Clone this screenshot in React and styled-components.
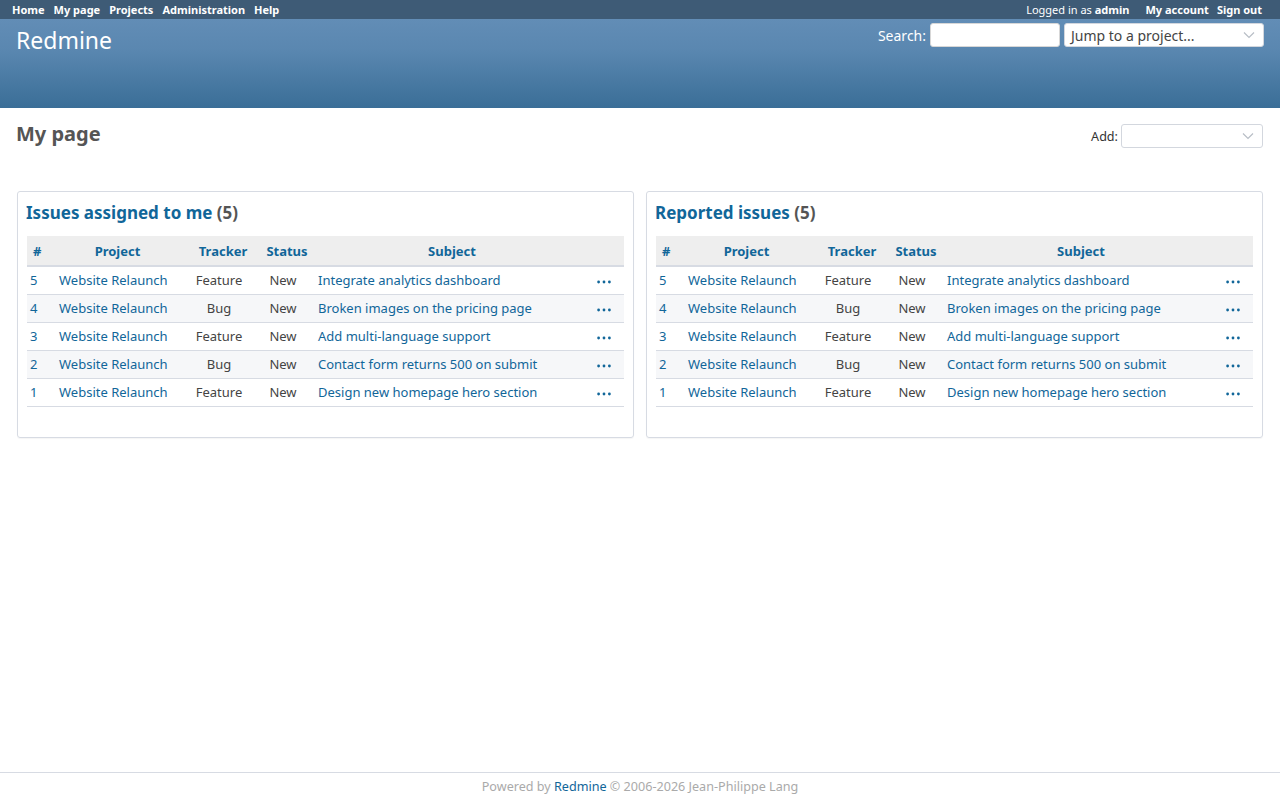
import React from "react";
import styled, { createGlobalStyle } from "styled-components";

const GlobalStyle = createGlobalStyle`
  html, body {
    margin: 0;
    padding: 0;
    height: 100%;
  }
  body {
    font-family: "Noto Sans", "DejaVu Sans", sans-serif;
    font-size: 13px;
    color: #333;
    background: #fff;
  }
  #root {
    min-height: 100%;
    display: flex;
    flex-direction: column;
  }
`;

const Wrapper = styled.div`
  display: flex;
  flex-direction: column;
  min-height: 100vh;
`;

const TopMenu = styled.div`
  display: flex;
  justify-content: space-between;
  align-items: center;
  height: 19px;
  padding: 0 18px 0 12px;
  background: #3e5b76;
  font-size: 11px;
  font-weight: bold;
  color: #fff;
`;

const MenuList = styled.div`
  display: flex;
  align-items: center;
  gap: ${(p) => p.$gap || 9}px;
`;

const MenuLink = styled.a`
  color: #fff;
  text-decoration: none;
`;

const LoggedAs = styled.span`
  font-weight: normal;
  margin-right: 8px;

  b {
    font-weight: bold;
  }
`;

const Header = styled.div`
  display: flex;
  justify-content: space-between;
  align-items: flex-start;
  height: 89px;
  box-sizing: border-box;
  padding: 4px 16px 0 16px;
  background: linear-gradient(to bottom, #628db6 0%, #5a87b0 35%, #3a6e97 100%);
  color: #fff;
`;

const Title = styled.h1`
  margin: 1px 0 0;
  font-size: 23px;
  font-weight: normal;
`;

const QuickSearch = styled.div`
  display: flex;
  align-items: center;
  gap: 4px;
  font-size: 14px;
`;

const SearchLabel = styled.label`
  color: #fff;
`;

const TextInput = styled.input`
  width: 130px;
  height: 24px;
  box-sizing: border-box;
  border: 1px solid #d7d7d7;
  border-radius: 3px;
  background: #fff;
  padding: 0 4px;
`;

const SelectBox = styled.div`
  display: flex;
  align-items: center;
  justify-content: space-between;
  width: ${(p) => p.width}px;
  height: 24px;
  box-sizing: border-box;
  border: 1px solid #d3d7de;
  border-radius: 3px;
  background: #fff;
  padding: 0 8px 0 6px;
  color: #444;
  font-size: 14px;
`;

const Main = styled.div`
  flex: 1;
  padding: 10px 17px 0 17px;
`;

const ContentHead = styled.div`
  display: flex;
  justify-content: space-between;
  align-items: flex-start;
  margin-bottom: 43px;
`;

const PageTitle = styled.h2`
  margin: 2px 0 0 -1px;
  font-size: 20px;
  font-weight: bold;
  color: #555;
`;

const AddBlock = styled.div`
  display: flex;
  align-items: center;
  gap: 3px;
  margin: 6px 0 0;
  font-size: 12.6px;
  color: #333;
`;

const Columns = styled.div`
  display: grid;
  grid-template-columns: 1fr 1fr;
  gap: 12px;
`;

const Box = styled.div`
  border: 1px solid #d7dbe3;
  border-radius: 3px;
  padding: 8px 9px 30px 9px;
  box-shadow: 0 1px 1px rgba(0, 0, 0, 0.04);
`;

const BoxTitle = styled.h3`
  margin: 1px 0 12px -1px;
  font-size: 17px;
  font-weight: bold;
  color: #555;

  a {
    color: #169;
    text-decoration: none;
  }
`;

const Table = styled.table`
  width: 100%;
  table-layout: fixed;
  border-collapse: collapse;
  font-size: 13px;
`;

const Th = styled.th`
  box-sizing: border-box;
  height: 30px;
  background: #eee;
  border-bottom: 2px solid #d7dbe3;
  color: #169;
  font-weight: bold;
  text-align: ${(p) => p.align || "center"};
  padding: ${(p) => p.$pad || "0 4px 0 12px"};
  width: ${(p) => p.width || "auto"};
`;

const Row = styled.tr`
  height: 28px;
  background: ${(p) => (p.$even ? "#f6f7f9" : "#fff")};
  border-bottom: 1px solid #d7dbe3;
`;

const Td = styled.td`
  padding: 0 4px 0 ${(p) => (p.$tight ? 3 : 4)}px;
  text-align: ${(p) => p.align || "left"};
  white-space: nowrap;
  overflow: hidden;
  color: #444;

  a {
    color: #169;
    text-decoration: none;
  }
`;

const MenuDots = styled.svg`
  display: inline-block;
  vertical-align: middle;
  margin-right: 9px;
`;

const Footer = styled.div`
  border-top: 1px solid #d7dbe3;
  text-align: center;
  color: #aaa;
  font-size: 12.6px;
  padding: 5px 0 5px;

  a {
    color: #169;
    text-decoration: none;
  }
`;

const Chevron = () => (
  <svg width="12" height="8" viewBox="0 0 12 8">
    <path d="M1 1.5 L6 6.5 L11 1.5" fill="none" stroke="#b8bec6" strokeWidth="1.2" />
  </svg>
);

const Dots = () => (
  <MenuDots width="14" height="4" viewBox="0 0 14 4">
    <circle cx="1.6" cy="2" r="1.4" fill="#169" />
    <circle cx="7" cy="2" r="1.4" fill="#169" />
    <circle cx="12.4" cy="2" r="1.4" fill="#169" />
  </MenuDots>
);

const issues = [
  { id: 5, tracker: "Feature", subject: "Integrate analytics dashboard" },
  { id: 4, tracker: "Bug", subject: "Broken images on the pricing page" },
  { id: 3, tracker: "Feature", subject: "Add multi-language support" },
  { id: 2, tracker: "Bug", subject: "Contact form returns 500 on submit" },
  { id: 1, tracker: "Feature", subject: "Design new homepage hero section" },
];

const IssueBox = ({ title }) => (
  <Box>
    <BoxTitle>
      <a href="#">{title}</a> (5)
    </BoxTitle>
    <Table>
      <thead>
        <tr>
          <Th width="28px" align="left" $pad="0 0 0 6px">#</Th>
          <Th width="131px" $pad="0 10px 0 4px">Project</Th>
          <Th width="66px">Tracker</Th>
          <Th width="62px">Status</Th>
          <Th>Subject</Th>
          <Th width="42px"></Th>
        </tr>
      </thead>
      <tbody>
        {issues.map((issue, i) => (
          <Row key={issue.id} $even={i % 2 === 1}>
            <Td $tight>
              <a href="#">{issue.id}</a>
            </Td>
            <Td>
              <a href="#">Website Relaunch</a>
            </Td>
            <Td align="center">{issue.tracker}</Td>
            <Td align="center">New</Td>
            <Td>
              <a href="#">{issue.subject}</a>
            </Td>
            <Td align="right">
              <Dots />
            </Td>
          </Row>
        ))}
      </tbody>
    </Table>
  </Box>
);

export default function App() {
  return (
    <Wrapper>
      <GlobalStyle />
      <TopMenu>
        <MenuList>
          <MenuLink href="#">Home</MenuLink>
          <MenuLink href="#">My page</MenuLink>
          <MenuLink href="#">Projects</MenuLink>
          <MenuLink href="#">Administration</MenuLink>
          <MenuLink href="#">Help</MenuLink>
        </MenuList>
        <MenuList $gap={8}>
          <LoggedAs>
            Logged in as <b>admin</b>
          </LoggedAs>
          <MenuLink href="#">My account</MenuLink>
          <MenuLink href="#">Sign out</MenuLink>
        </MenuList>
      </TopMenu>
      <Header>
        <Title>Redmine</Title>
        <QuickSearch>
          <SearchLabel>Search:</SearchLabel>
          <TextInput type="text" />
          <SelectBox width={200}>
            <span>Jump to a project...</span>
            <Chevron />
          </SelectBox>
        </QuickSearch>
      </Header>
      <Main>
        <ContentHead>
          <PageTitle>My page</PageTitle>
          <AddBlock>
            <span>Add:</span>
            <SelectBox width={142}>
              <span></span>
              <Chevron />
            </SelectBox>
          </AddBlock>
        </ContentHead>
        <Columns>
          <IssueBox title="Issues assigned to me" />
          <IssueBox title="Reported issues" />
        </Columns>
      </Main>
      <Footer>
        Powered by <a href="#">Redmine</a> © 2006-2026 Jean-Philippe Lang
      </Footer>
    </Wrapper>
  );
}
